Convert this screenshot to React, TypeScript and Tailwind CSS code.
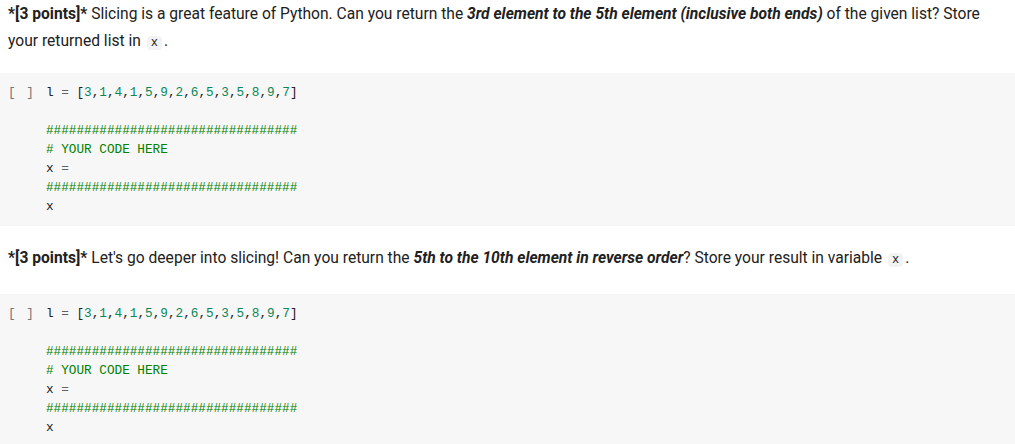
import React from 'react';

const nums = [3, 1, 4, 1, 5, 9, 2, 6, 5, 3, 5, 8, 9, 7];

const Chip = ({ children }: { children: React.ReactNode }) => (
  <code className="bg-[#f3f3f3] rounded px-[4px] mx-[2px] text-[12px] text-[#212121] font-['Liberation_Mono',monospace]">
    {children}
  </code>
);

const CodeCell = () => (
  <div className="bg-[#f7f7f7] flex pt-[10px] pb-[10px] font-['Liberation_Mono',monospace] text-[12.7px] leading-[19px]">
    <div className="w-[46px] pl-[8px] text-[#757575] tracking-[1.5px] whitespace-pre">[ ]</div>
    <div className="flex flex-col">
      <div className="text-[#212121] whitespace-pre">
        l <span className="text-[#616161]">=</span> [
        {nums.map((n, i) => (
          <span key={i}>
            <span className="text-[#098658]">{n}</span>
            {i < nums.length - 1 ? ',' : ''}
          </span>
        ))}
        ]
      </div>
      <div className="h-[19px]" />
      <div className="text-[#008000]">#################################</div>
      <div className="text-[#008000] whitespace-pre"># YOUR CODE HERE</div>
      <div className="text-[#212121] whitespace-pre">x <span className="text-[#616161]">=</span></div>
      <div className="text-[#008000]">#################################</div>
      <div className="text-[#212121]">x</div>
    </div>
  </div>
);

export default function App() {
  return (
    <div className="w-[1015px] h-[444px] overflow-hidden bg-white font-['Roboto',sans-serif] text-[15.6px] text-[#212121]">
      <p className="px-[8px] pt-[1px] leading-[27px]">
        <b>*[3 points]*</b> Slicing is a great feature of Python. Can you return the{' '}
        <b><i>3rd element to the 5th element (inclusive both ends)</i></b> of the given list? Store your
        returned list in <Chip>x</Chip>.
      </p>
      <div className="h-[16px]" />
      <CodeCell />
      <p className="px-[8px] pt-[19px] pb-[20px] leading-[27px]">
        <b>*[3 points]*</b> Let's go deeper into slicing! Can you return the{' '}
        <b><i>5th to the 10th element in reverse order</i></b>? Store your result in variable <Chip>x</Chip>.
      </p>
      <CodeCell />
    </div>
  );
}
